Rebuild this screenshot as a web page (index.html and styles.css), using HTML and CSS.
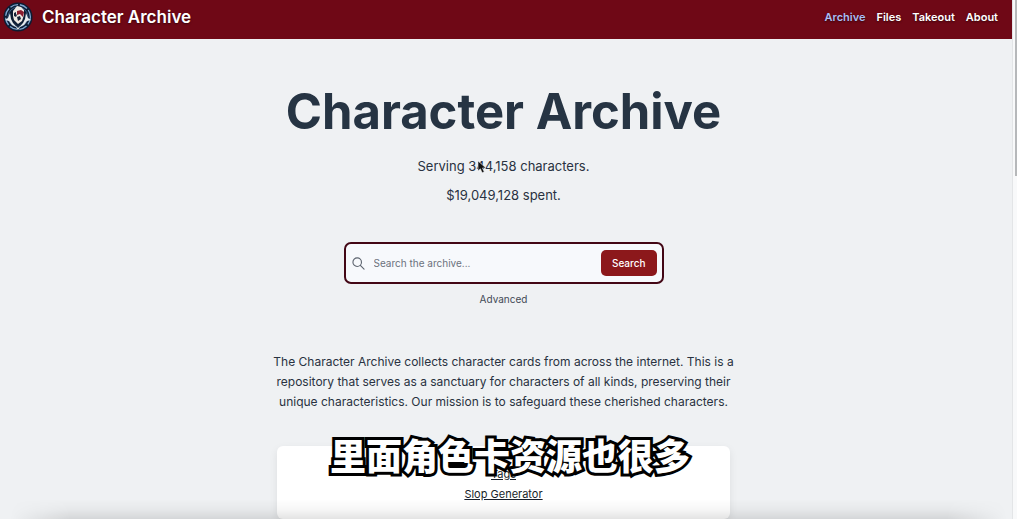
FILE: index.html
```
<!DOCTYPE html>
<html lang="en">
<head>
  <meta charset="UTF-8">
  <meta name="viewport" content="width=device-width, initial-scale=1.0">
  <title>Character Archive</title>
  <link rel="stylesheet" href="styles.css">
</head>
<body>

  <div class="page">
    <header class="navbar">
      <a class="brand" href="#">
        <svg class="logo" viewBox="0 0 30 30" aria-hidden="true">
          <circle cx="15" cy="15" r="14.5" fill="#0d1c33"/>
          <circle cx="15" cy="15" r="12.4" fill="none" stroke="#7ea6d0" stroke-width="1.3" stroke-dasharray="8 2"/>
          <circle cx="15" cy="15" r="10" fill="none" stroke="#34577f" stroke-width="1"/>
          <path d="M10 14l0-5 4-5 4 1 3 3 0 5-2 6-4 3-4-4z" fill="#eee9e4"/>
          <path d="M14 9l4-1 3 2-1 5-3-3-3 1z" fill="#8a1c2e"/>
          <path d="M11 11l2-1 0 2 1 1-1 2-2-1zM14 15l3-1 1 3-3 2z" fill="#182338"/>
          <path d="M2 18l3-2 2-5 1 6 2 4 5 5 5-5 2-4 1-6 2 5 3 2-4 1-3 4-4 2-2 3-2-3-4-2-3-4z" fill="#e6ebee"/>
          <path d="M11 20l4 4 4-4-1 3-3 2-3-2z" fill="#172a45"/>
        </svg>
        <span>Character Archive</span>
      </a>
      <nav class="nav-links">
        <a class="active" href="#">Archive</a>
        <a href="#">Files</a>
        <a href="#">Takeout</a>
        <a href="#">About</a>
      </nav>
    </header>

    <main class="content">
      <h1>Character Archive</h1>
      <div class="stats">
        <p>Serving 344,158 characters.</p>
        <p>$19,049,128 spent.</p>
      </div>

      <form class="search">
        <label for="query" aria-label="Search the archive">
          <svg class="search-icon" viewBox="0 0 14 14" aria-hidden="true">
            <circle cx="5.6" cy="5.6" r="4.6"/>
            <path d="M9 9l4 4"/>
          </svg>
        </label>
        <input type="text" id="query" placeholder="Search the archive...">
        <button type="submit">Search</button>
      </form>
      <a class="advanced" href="#">Advanced</a>

      <p class="intro">The Character Archive collects character cards from across the internet. This is a repository that serves as a sanctuary for characters of all kinds, preserving their unique characteristics. Our mission is to safeguard these cherished characters.</p>

      <section class="card">
        <a href="#">Tags</a>
        <a href="#">Slop Generator</a>
      </section>
    </main>
  </div>

  <div class="scrollbar"><div class="thumb"></div></div>

  <div class="shade"></div>
  <p class="caption" lang="zh-CN">里面角色卡资源也很多</p>
  <svg class="cursor" viewBox="0 0 10 14" aria-hidden="true">
    <path d="M1 1v10l2.4-2.2 1.8 4 2-1-1.8-3.8H9z" fill="#111" stroke="#e8eaed" stroke-width="0.6"/>
  </svg>

</body>
</html>
```
FILE: styles.css
```
* {
  box-sizing: border-box;
}
body {
  margin: 0;
  display: flex;
  height: 100vh;
  overflow: hidden;
  font-family: Inter, "Liberation Sans", sans-serif;
  background: #eff1f3;
  color: #293241;
}
a {
  color: inherit;
  text-decoration: none;
}
p {
  margin: 0;
}
.page {
  flex: 1;
}

/* top bar */
.navbar {
  display: flex;
  justify-content: space-between;
  align-items: center;
  height: 39px;
  padding: 0 14px 5px 3px;
  background: #6f0816;
  color: #fff;
  text-shadow: 0 1px 2px rgba(0, 0, 0, 0.5);
}
.brand {
  display: flex;
  align-items: center;
  gap: 9px;
  font-size: 17px;
  font-weight: 600;
}
.logo {
  width: 30px;
  height: 30px;
}
.nav-links {
  display: flex;
  gap: 11px;
  font-size: 11px;
  font-weight: 600;
}
.nav-links .active {
  color: #a9bff5;
}

/* main column */
.content {
  display: flex;
  flex-direction: column;
  align-items: center;
  padding: 44px 5px 0 0;
}
h1 {
  margin: 0;
  font-size: 49px;
  line-height: 58px;
  font-weight: 700;
  color: #263443;
}
.stats {
  margin-top: 11px;
  font-size: 13px;
  line-height: 29px;
  text-align: center;
}
.search {
  display: flex;
  align-items: center;
  gap: 9px;
  width: 320px;
  height: 42px;
  margin-top: 32px;
  padding: 0 5px 0 6px;
  border: 2px solid #430715;
  border-radius: 7px;
  background: #f7f9fc;
}
.search label {
  display: flex;
}
.search-icon {
  width: 13px;
  height: 13px;
  fill: none;
  stroke: #5c636e;
  stroke-width: 1.2;
  stroke-linecap: round;
}
.search input {
  flex: 1;
  min-width: 0;
  padding: 0;
  border: 0;
  outline: 0;
  background: none;
  font: 10px Inter, sans-serif;
}
.search input::placeholder {
  color: #6c727c;
}
.search button {
  height: 26px;
  padding: 0 11px;
  border: 0;
  border-radius: 5px;
  background: #8c181b;
  color: #fff;
  font: 500 10px Inter, sans-serif;
}
.advanced {
  margin-top: 7px;
  font-size: 10px;
  line-height: 16px;
  color: #434a56;
}
.intro {
  max-width: 470px;
  margin-top: 45px;
  font-size: 12px;
  line-height: 20px;
  text-align: center;
}
.card {
  display: flex;
  flex-direction: column;
  align-items: center;
  width: 453px;
  margin-top: 34px;
  padding: 18px 0 15px;
  border-radius: 6px;
  background: #fff;
  box-shadow: 0 3px 8px rgba(0, 0, 0, 0.08);
  font-size: 11px;
  line-height: 20px;
  color: #181f2a;
}
.card a {
  text-decoration: underline;
}

/* scrollbar */
.scrollbar {
  width: 5px;
  padding-left: 2px;
  border-left: 1px solid #e3e5e7;
  background: #f8f9fa;
}
.thumb {
  height: 34vh;
  background: #b6b8ba;
}

/* overlays */
.shade {
  position: absolute;
  left: 10px;
  right: 10px;
  bottom: 0;
  height: 20px;
  background: linear-gradient(transparent, rgba(0, 0, 0, 0.03) 50%, rgba(0, 0, 0, 0.11));
  mask-image: linear-gradient(to right, transparent, #000 60px, #000 calc(100% - 60px), transparent);
}
.caption {
  position: absolute;
  left: 0;
  right: 0;
  bottom: 38px;
  padding-left: 3px;
  text-align: center;
  font-family: "Noto Sans CJK SC", sans-serif;
  font-size: 36px;
  line-height: 54px;
  font-weight: 900;
  color: #fff;
  -webkit-text-stroke: 6px #000;
  paint-order: stroke fill;
}
.cursor {
  position: absolute;
  left: 477px;
  top: 160px;
  width: 10px;
  height: 14px;
}
```
